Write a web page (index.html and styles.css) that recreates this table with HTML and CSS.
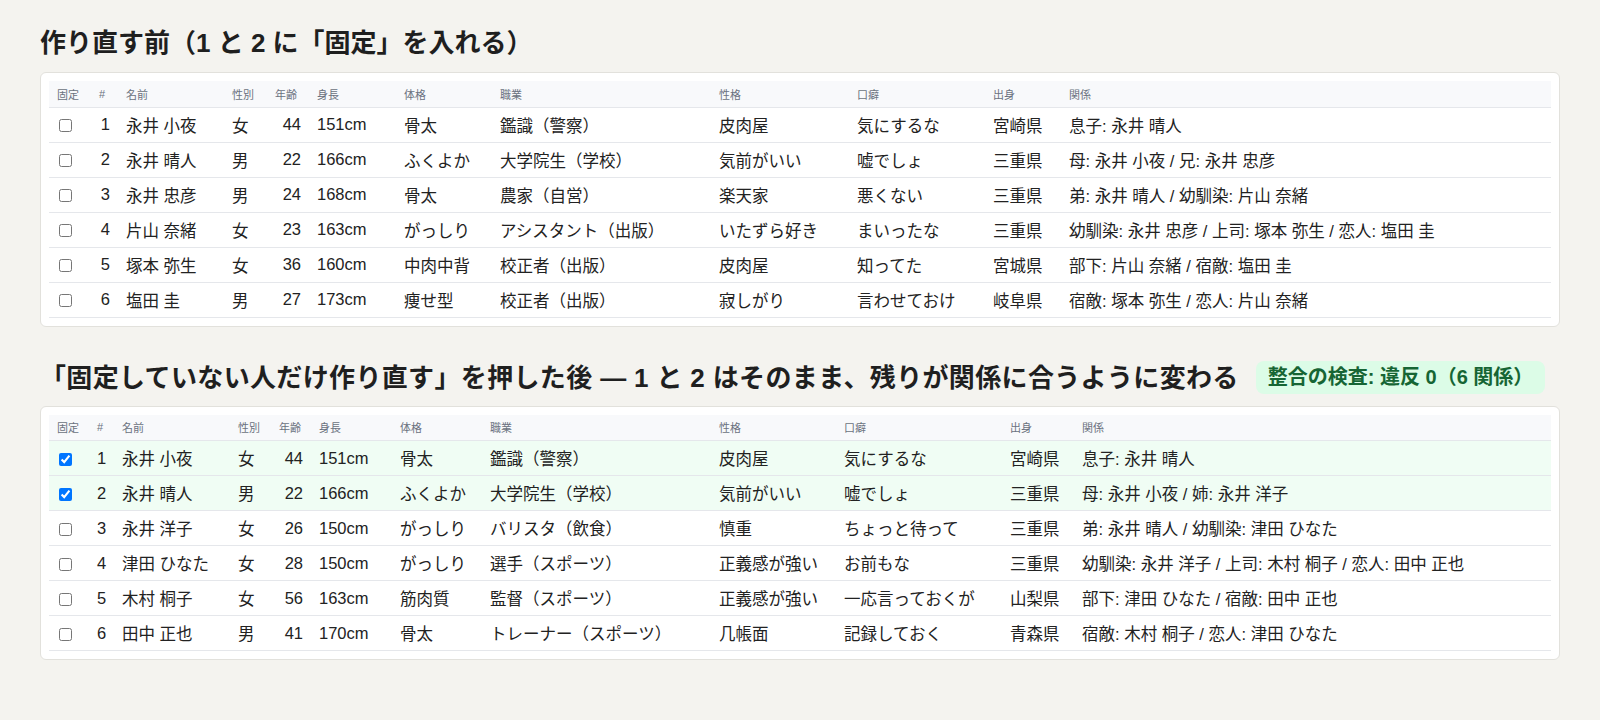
FILE: index.html
```html
<!DOCTYPE html>
<html lang="ja">
<head>
<meta charset="utf-8">
<title>作り直し</title>
<link rel="stylesheet" href="styles.css">
</head>
<body>
<h2 class="title">作り直す前（1 と 2 に「固定」を入れる）</h2>
<div class="card">
<table class="grid t1">
<colgroup>
<col class="c1"><col class="c2"><col class="c3"><col class="c4"><col class="c5"><col class="c6"><col class="c7"><col class="c8"><col class="c9"><col class="c10"><col class="c11"><col>
</colgroup>
<thead>
<tr><th>固定</th><th>#</th><th>名前</th><th>性別</th><th>年齢</th><th>身長</th><th>体格</th><th>職業</th><th>性格</th><th>口癖</th><th>出身</th><th>関係</th></tr>
</thead>
<tbody>
<tr><td><input type="checkbox"></td><td class="num">1</td><td>永井 小夜</td><td>女</td><td class="num">44</td><td>151cm</td><td>骨太</td><td>鑑識（警察）</td><td>皮肉屋</td><td>気にするな</td><td>宮崎県</td><td>息子: 永井 晴人</td></tr>
<tr><td><input type="checkbox"></td><td class="num">2</td><td>永井 晴人</td><td>男</td><td class="num">22</td><td>166cm</td><td>ふくよか</td><td>大学院生（学校）</td><td>気前がいい</td><td>嘘でしょ</td><td>三重県</td><td>母: 永井 小夜 / 兄: 永井 忠彦</td></tr>
<tr><td><input type="checkbox"></td><td class="num">3</td><td>永井 忠彦</td><td>男</td><td class="num">24</td><td>168cm</td><td>骨太</td><td>農家（自営）</td><td>楽天家</td><td>悪くない</td><td>三重県</td><td>弟: 永井 晴人 / 幼馴染: 片山 奈緒</td></tr>
<tr><td><input type="checkbox"></td><td class="num">4</td><td>片山 奈緒</td><td>女</td><td class="num">23</td><td>163cm</td><td>がっしり</td><td>アシスタント（出版）</td><td>いたずら好き</td><td>まいったな</td><td>三重県</td><td>幼馴染: 永井 忠彦 / 上司: 塚本 弥生 / 恋人: 塩田 圭</td></tr>
<tr><td><input type="checkbox"></td><td class="num">5</td><td>塚本 弥生</td><td>女</td><td class="num">36</td><td>160cm</td><td>中肉中背</td><td>校正者（出版）</td><td>皮肉屋</td><td>知ってた</td><td>宮城県</td><td>部下: 片山 奈緒 / 宿敵: 塩田 圭</td></tr>
<tr><td><input type="checkbox"></td><td class="num">6</td><td>塩田 圭</td><td>男</td><td class="num">27</td><td>173cm</td><td>痩せ型</td><td>校正者（出版）</td><td>寂しがり</td><td>言わせておけ</td><td>岐阜県</td><td>宿敵: 塚本 弥生 / 恋人: 片山 奈緒</td></tr>
</tbody>
</table>
</div>

<div class="title-row">
<h2 class="title title-wide">「固定していない人だけ作り直す」を押した後 — 1 と 2 はそのまま、残りが関係に合うように変わる</h2>
<span class="badge">整合の検査: 違反 0（6 関係）</span>
</div>
<div class="card">
<table class="grid t2">
<colgroup>
<col class="c1"><col class="c2"><col class="c3"><col class="c4"><col class="c5"><col class="c6"><col class="c7"><col class="c8"><col class="c9"><col class="c10"><col class="c11"><col>
</colgroup>
<thead>
<tr><th>固定</th><th>#</th><th>名前</th><th>性別</th><th>年齢</th><th>身長</th><th>体格</th><th>職業</th><th>性格</th><th>口癖</th><th>出身</th><th>関係</th></tr>
</thead>
<tbody>
<tr class="locked"><td><input type="checkbox" checked></td><td class="num">1</td><td>永井 小夜</td><td>女</td><td class="num">44</td><td>151cm</td><td>骨太</td><td>鑑識（警察）</td><td>皮肉屋</td><td>気にするな</td><td>宮崎県</td><td>息子: 永井 晴人</td></tr>
<tr class="locked"><td><input type="checkbox" checked></td><td class="num">2</td><td>永井 晴人</td><td>男</td><td class="num">22</td><td>166cm</td><td>ふくよか</td><td>大学院生（学校）</td><td>気前がいい</td><td>嘘でしょ</td><td>三重県</td><td>母: 永井 小夜 / 姉: 永井 洋子</td></tr>
<tr><td><input type="checkbox"></td><td class="num">3</td><td>永井 洋子</td><td>女</td><td class="num">26</td><td>150cm</td><td>がっしり</td><td>バリスタ（飲食）</td><td>慎重</td><td>ちょっと待って</td><td>三重県</td><td>弟: 永井 晴人 / 幼馴染: 津田 ひなた</td></tr>
<tr><td><input type="checkbox"></td><td class="num">4</td><td>津田 ひなた</td><td>女</td><td class="num">28</td><td>150cm</td><td>がっしり</td><td>選手（スポーツ）</td><td>正義感が強い</td><td>お前もな</td><td>三重県</td><td>幼馴染: 永井 洋子 / 上司: 木村 桐子 / 恋人: 田中 正也</td></tr>
<tr><td><input type="checkbox"></td><td class="num">5</td><td>木村 桐子</td><td>女</td><td class="num">56</td><td>163cm</td><td>筋肉質</td><td>監督（スポーツ）</td><td>正義感が強い</td><td>一応言っておくが</td><td>山梨県</td><td>部下: 津田 ひなた / 宿敵: 田中 正也</td></tr>
<tr><td><input type="checkbox"></td><td class="num">6</td><td>田中 正也</td><td>男</td><td class="num">41</td><td>170cm</td><td>骨太</td><td>トレーナー（スポーツ）</td><td>几帳面</td><td>記録しておく</td><td>青森県</td><td>宿敵: 木村 桐子 / 恋人: 津田 ひなた</td></tr>
</tbody>
</table>
</div>
</body>
</html>
```
FILE: styles.css
```css
* { box-sizing: border-box; }

html, body {
  margin: 0;
  background: #f4f3ef;
}

body {
  padding: 25px 40px 40px;
  font-family: "Liberation Sans", "Noto Sans CJK JP", sans-serif;
  color: #222;
}

.title {
  margin: 0 0 11px;
  font-size: 26px;
  line-height: 36px;
  font-weight: 700;
  color: #1f1f1f;
}

.title-wide {
  letter-spacing: 0.35px;
}

.title-row {
  display: flex;
  align-items: center;
  gap: 17px;
  margin-bottom: 10px;
}

.title-row .title {
  margin: 0;
}

.badge {
  display: inline-block;
  height: 33px;
  line-height: 33px;
  padding: 0 12px;
  border-radius: 8px;
  background: #dcfce7;
  color: #166534;
  font-size: 20px;
  font-weight: 700;
  white-space: nowrap;
}

.card {
  background: #fff;
  border: 1px solid #e2e1dc;
  border-radius: 6px;
  padding: 8px;
  margin-bottom: 33px;
}

.grid {
  width: 100%;
  table-layout: fixed;
  border-collapse: collapse;
  font-size: 16.5px;
}

.grid th {
  height: 26px;
  padding: 0 8px;
  background: #f8f9fb;
  color: #6b7280;
  font-size: 11px;
  font-weight: 400;
  text-align: left;
  vertical-align: middle;
  border-bottom: 1px solid #e5e7eb;
  white-space: nowrap;
}

.grid td {
  height: 35px;
  padding: 0 8px;
  vertical-align: middle;
  border-bottom: 1px solid #e5e7eb;
  white-space: nowrap;
}

.grid td.num {
  text-align: right;
}

.grid input[type="checkbox"] {
  width: 13px;
  height: 13px;
  margin: 0 0 0 2px;
  vertical-align: middle;
}

.grid tr.locked td {
  background: #f0fdf4;
}

.t1 .c1 { width: 42px; }
.t1 .c2 { width: 27px; }
.t1 .c3 { width: 106px; }
.t1 .c4 { width: 43px; }
.t1 .c5 { width: 42px; }
.t1 .c6 { width: 87px; }
.t1 .c7 { width: 96px; }
.t1 .c8 { width: 219px; }
.t1 .c9 { width: 138px; }
.t1 .c10 { width: 136px; }
.t1 .c11 { width: 76px; }

.t2 .c1 { width: 40px; }
.t2 .c2 { width: 25px; }
.t2 .c3 { width: 116px; }
.t2 .c4 { width: 41px; }
.t2 .c5 { width: 40px; }
.t2 .c6 { width: 81px; }
.t2 .c7 { width: 90px; }
.t2 .c8 { width: 229px; }
.t2 .c9 { width: 125px; }
.t2 .c10 { width: 166px; }
.t2 .c11 { width: 72px; }
```
